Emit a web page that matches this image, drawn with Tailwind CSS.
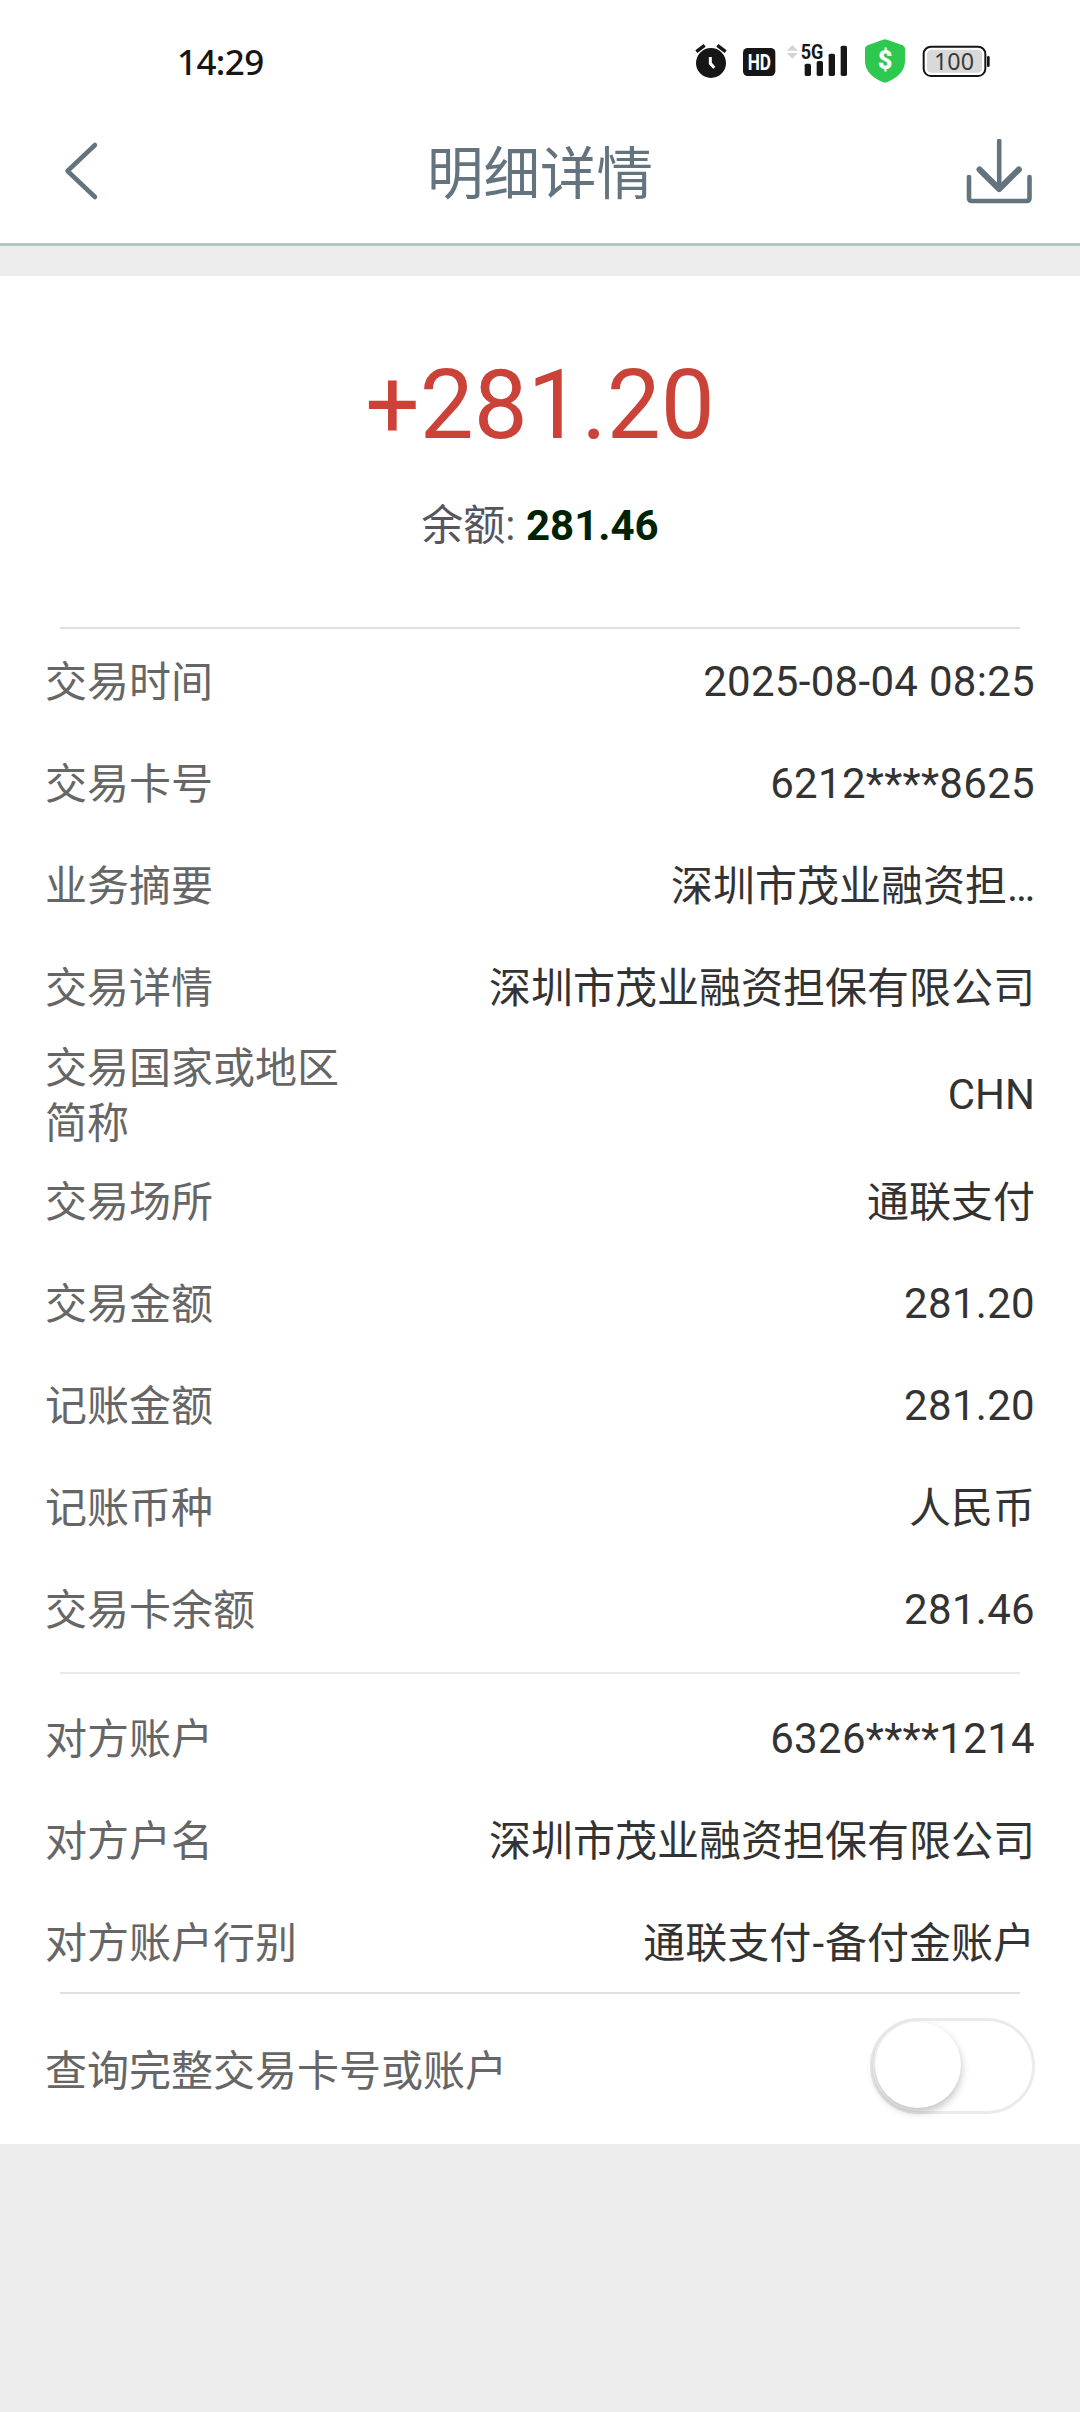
<!DOCTYPE html>
<html lang="zh-CN">
<head>
    <meta charset="UTF-8">
    <meta name="viewport" content="width=device-width, initial-scale=1.0">
    <title>明细详情</title>
    <script src="https://cdn.jsdelivr.net/npm/@tailwindcss/browser@4"></script>
</head>
<body class="bg-[#ededed] font-['Roboto','Noto_Sans_CJK_SC',sans-serif]">
    <div class="w-[1080px] min-h-[2412px]">
        <!-- Status bar -->
        <div class="bg-white h-[100px] pt-[30px] pl-[177px] pr-[89px] flex justify-between items-start">
            <span class="font-['Noto_Sans'] font-medium text-[35px] leading-[64px] tracking-[-0.6px] text-[#161616]">14:29</span>
            <div class="flex">
                <svg class="w-[33px] h-[65px]" viewBox="45 0 99 195" fill="none">
                    <circle cx="93" cy="99" r="45" fill="#161616"/>
                    <path d="M49 65L74 46M137 65L112 46" stroke="#161616" stroke-width="10"/>
                    <path d="M91 81V100L103 113" stroke="#fff" stroke-width="9"/>
                </svg>
                <svg class="w-[33px] h-[65px] ml-[15px] overflow-visible" viewBox="189 0 99 195">
                    <rect x="189" y="54" width="97" height="84" rx="14" fill="#161616"/>
                    <text x="238" y="119" text-anchor="middle" textLength="70" lengthAdjust="spacingAndGlyphs" font-family="Roboto" font-weight="700" font-size="64" fill="#fff">HD</text>
                </svg>
                <svg class="w-[62px] h-[65px] ml-[10px] overflow-visible" viewBox="318 0 186 195">
                    <path d="M320 62L337 45L354 62ZM320 69L337 86L354 69Z" fill="#d4d4d4"/>
                    <text x="362" y="86" textLength="68" lengthAdjust="spacingAndGlyphs" font-family="Roboto" font-weight="700" font-size="60" fill="#161616">5G</text>
                    <rect x="374" y="101" width="19" height="37" rx="5" fill="#161616"/>
                    <rect x="410" y="93" width="19" height="45" rx="5" fill="#161616"/>
                    <rect x="446" y="71" width="19" height="67" rx="5" fill="#161616"/>
                    <rect x="482" y="47" width="19" height="91" rx="5" fill="#161616"/>
                </svg>
                <svg class="w-[42px] h-[65px] ml-[16px]" viewBox="552 0 126 195">
                    <path d="M609 29Q615 26 621 29L668 46Q675 49 675 57V94C675 124 650 145 622 156Q615 159 608 156C580 145 555 124 555 94V57Q555 49 562 46Z" fill="#2fc84e"/>
                    <text x="615" y="118" text-anchor="middle" font-family="Roboto" font-weight="900" font-size="76" fill="#fff">$</text>
                </svg>
                <svg class="w-[69px] h-[65px] ml-[16px]" viewBox="726 0 207 195">
                    <rect x="731" y="50" width="185" height="88" rx="22" fill="#fff" stroke="#161616" stroke-width="6"/>
                    <rect x="741" y="59" width="165" height="69" rx="13" fill="#d9d9d9"/>
                    <rect x="921" y="78" width="8" height="33" rx="4" fill="#161616"/>
                    <text x="822" y="119" text-anchor="middle" textLength="120" lengthAdjust="spacingAndGlyphs" font-family="Noto Sans" font-size="73" fill="#3a3a3a">100</text>
                </svg>
            </div>
        </div>

        <!-- Title bar -->
        <div class="bg-white h-[146px] border-b-[3px] border-[#b4c7c7] px-12 flex items-center justify-between">
            <svg class="w-[66px] h-[66px] text-[#63747f]" viewBox="48 138 66 66" fill="none" stroke="currentColor" stroke-width="4.5" stroke-linecap="round" stroke-linejoin="round">
                <path d="M95 144L67.500 170L95 196"/>
            </svg>
            <h1 class="pt-1.5 text-[56.5px] leading-[80px] text-[#63747f]">明细详情</h1>
            <svg class="w-[66px] h-[66px] text-[#63747f]" viewBox="966 138 66 66" fill="none" stroke="currentColor" stroke-width="4.600" stroke-linecap="round" stroke-linejoin="round">
                <path d="M969 176V197Q969 200 972 200H1026.500Q1029.500 200 1029.500 197V176"/>
                <path d="M999.200 140V188"/>
                <path d="M979.500 168.500L999.200 188L1018.900 168.500" stroke-width="6"/>
            </svg>
        </div>

        <div class="bg-white mt-[30px] h-[1868px]">
            <!-- Amount -->
            <div class="h-[351px] pt-[73px] text-center">
                <div class="text-[96px] leading-[112px] text-[#cb4238]">+281.20</div>
                <div class="mt-[33px] text-[42px] leading-[64px] text-[#55555f]">余额: <span class="font-bold text-[#002200]">281.46</span></div>
            </div>

            <div class="mx-[60px] h-0.5 bg-[#e0e0e0]"></div>

            <!-- Transaction -->
            <div class="px-[45px] pt-0.5 text-[42px] leading-[55px] text-[#333333]">
                <div class="h-[102px] flex items-center justify-between"><span class="text-[#666666]">交易时间</span><span class="pb-0.5 tracking-[0.3px]">2025-08-04 08:25</span></div>
                <div class="h-[102px] flex items-center justify-between"><span class="text-[#666666]">交易卡号</span><span class="pb-0.5 tracking-[0.3px]">6212****8625</span></div>
                <div class="h-[102px] flex items-center justify-between"><span class="text-[#666666]">业务摘要</span><span>深圳市茂业融资担<span class="font-['Roboto']">…</span></span></div>
                <div class="h-[102px] flex items-center justify-between"><span class="text-[#666666]">交易详情</span><span>深圳市茂业融资担保有限公司</span></div>
                <div class="h-[112px] flex items-center justify-between"><span class="w-[300px] pt-px text-[#666666]">交易国家或地区简称</span><span class="pb-0.5">CHN</span></div>
                <div class="h-[102px] flex items-center justify-between"><span class="text-[#666666]">交易场所</span><span>通联支付</span></div>
                <div class="h-[102px] flex items-center justify-between"><span class="text-[#666666]">交易金额</span><span class="pb-0.5 tracking-[0.3px]">281.20</span></div>
                <div class="h-[102px] flex items-center justify-between"><span class="text-[#666666]">记账金额</span><span class="pb-0.5 tracking-[0.3px]">281.20</span></div>
                <div class="h-[102px] flex items-center justify-between"><span class="text-[#666666]">记账币种</span><span>人民币</span></div>
                <div class="h-[102px] flex items-center justify-between"><span class="text-[#666666]">交易卡余额</span><span class="pb-0.5 tracking-[0.3px]">281.46</span></div>
            </div>

            <div class="mx-[60px] mt-[11px] h-0.5 bg-[#e8e8e8]"></div>

            <!-- Counterparty -->
            <div class="px-[45px] h-[318px] pt-[14px] text-[42px] leading-[55px] text-[#333333]">
                <div class="h-[102px] flex items-center justify-between"><span class="text-[#666666]">对方账户</span><span class="pb-0.5 tracking-[0.3px]">6326****1214</span></div>
                <div class="h-[102px] flex items-center justify-between"><span class="text-[#666666]">对方户名</span><span>深圳市茂业融资担保有限公司</span></div>
                <div class="h-[102px] flex items-center justify-between"><span class="text-[#666666]">对方账户行别</span><span>通联支付<span class="mx-px">-</span>备付金账户</span></div>
            </div>

            <div class="mx-[60px] h-0.5 bg-[#e0e0e0]"></div>

            <!-- Full number switch -->
            <div class="h-[150px] px-[45px] flex items-start justify-between text-[42px]">
                <span class="mt-[50px] leading-[55px] text-[#666666]">查询完整交易卡号或账户</span>
                <div class="mt-[24px] w-[165px] h-[96px] rounded-full border-[3px] border-[#ebebeb]">
                    <div class="ml-0.5 mt-px w-[86px] h-[86px] rounded-full bg-white shadow-[0_4px_9px_rgba(0,0,0,0.26)]"></div>
                </div>
            </div>
        </div>
    </div>
</body>
</html>
